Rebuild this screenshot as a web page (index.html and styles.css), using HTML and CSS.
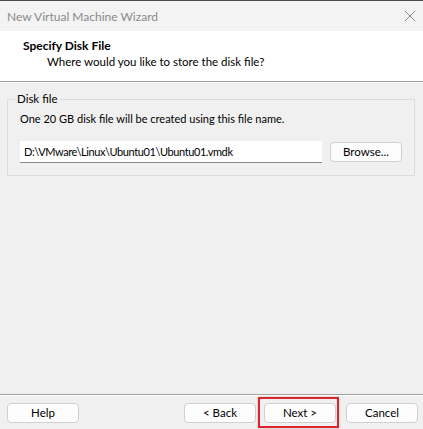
FILE: index.html
```html
<!DOCTYPE html>
<html>
<head>
<meta charset="utf-8">
<link rel="stylesheet" href="styles.css">
</head>
<body>
<div class="window">
  <div class="titlebar">
    <span class="title">New Virtual Machine Wizard</span>
    <svg class="close" width="12" height="12" viewBox="0 0 12 12"><path d="M1 1L11 11M11 1L1 11" stroke="#8a8a8a" stroke-width="1" fill="none"/></svg>
  </div>
  <div class="header">
    <div class="h-title">Specify Disk File</div>
    <div class="h-sub">Where would you like to store the disk file?</div>
  </div>
  <div class="content">
    <fieldset class="group">
      <legend>Disk file</legend>
      <div class="desc">One 20 GB disk file will be created using this file name.</div>
      <div class="filerow">
        <div class="input">D:\VMware\Linux\Ubuntu01\Ubuntu01.vmdk</div>
        <button class="btn browse">Browse...</button>
      </div>
    </fieldset>
  </div>
  <div class="footer">
    <button class="btn help">Help</button>
    <div class="spacer"></div>
    <button class="btn back">&lt; Back</button>
    <div class="next-wrap">
      <button class="btn next">Next &gt;</button>
      <span class="highlight"></span>
    </div>
    <button class="btn cancel">Cancel</button>
  </div>
</div>
</body>
</html>
```
FILE: styles.css
```css
html, body {
  margin: 0;
  padding: 0;
}
body {
  font-family: "Lato", "Noto Sans", sans-serif;
  font-size: 11px;
  color: #000;
  background: #f0f0f0;
}
.window {
  width: 423px;
  height: 429px;
  display: flex;
  flex-direction: column;
  background: #f0f0f0;
  overflow: hidden;
}
.titlebar {
  height: 30px;
  border-top: 1px solid #4a4a4a;
  background: #f3f3f3;
  display: flex;
  align-items: center;
  justify-content: space-between;
  padding: 0 6px 0 7px;
}
.title {
  color: #8a8a8a;
  font-size: 12px;
}
.close {
  margin-right: 1px;
}
.header {
  height: 51px;
  background: #fff;
  border-bottom: 1px solid #a0a0a0;
  box-shadow: 0 1px 0 #fff;
  padding: 7px 0 0 23px;
  box-sizing: border-box;
}
.h-title {
  font-weight: bold;
  font-size: 12px;
  line-height: 16px;
}
.h-sub {
  padding-left: 24px;
  font-size: 11.5px;
  line-height: 16px;
}
.content {
  flex: 1;
  padding-top: 10px;
}
.group {
  margin: 0 8px 0 7px;
  border: 1px solid #dcdcdc;
  padding: 0 12px 12px 12px;
}
.group legend {
  padding: 0 2px;
  margin-left: -5px;
  line-height: 14px;
  font-size: 11.5px;
}
.desc {
  line-height: 16px;
  margin-top: 5px;
}
.filerow {
  display: flex;
  align-items: center;
  margin-top: 14px;
}
.input {
  width: 302px;
  height: 22px;
  box-sizing: border-box;
  background: #fff;
  border-bottom: 1px solid #8a8a8a;
  padding: 0 4px;
  line-height: 21px;
  letter-spacing: -0.4px;
}
.btn {
  font-family: "Lato", "Noto Sans", sans-serif;
  font-size: 11.5px;
  color: #000;
  background: #fdfdfd;
  border: 1px solid #d0d0d0;
  border-radius: 4px;
  height: 20px;
  width: 72px;
  padding: 0;
  margin: 0;
  line-height: 18px;
}
.browse {
  margin-left: 8px;
  height: 20px;
}
.footer {
  height: 26px;
  border-top: 1px solid #a0a0a0;
  box-shadow: inset 0 1px 0 #fff;
  display: flex;
  align-items: flex-start;
  padding: 8px 5px 0 7px;
  box-sizing: content-box;
}
.spacer {
  flex: 1;
}
.next-wrap {
  position: relative;
  margin-left: 8px;
}
.highlight {
  position: absolute;
  left: -6px;
  top: -6px;
  width: 81px;
  height: 31px;
  border: 2px solid #d8262c;
  box-sizing: border-box;
  box-shadow: 0 0 2px rgba(0,0,0,0.25);
}
.cancel {
  margin-left: 10px;
}
```
